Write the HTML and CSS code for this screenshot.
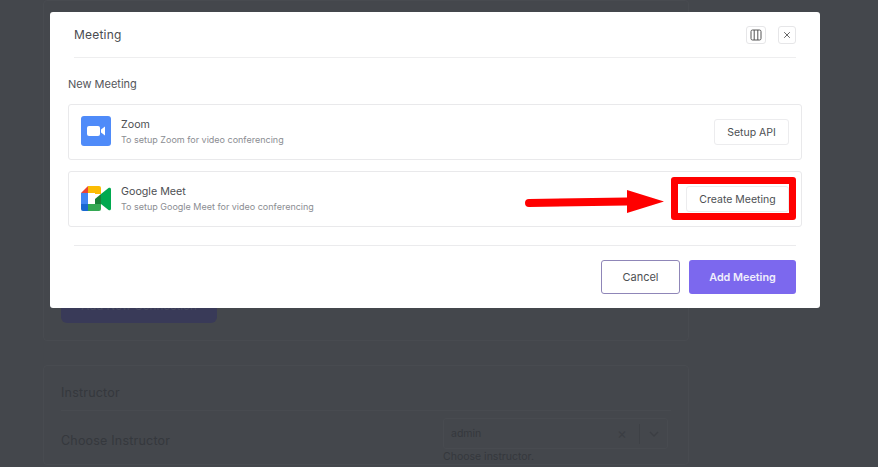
FILE: index.html
```html
<!DOCTYPE html>
<html lang="en">
<head>
    <title>Meeting</title>
    <link rel="stylesheet" href="styles.css">
</head>
<body>
    <div class="page">
        <div class="panel panel-top">
            <button class="connect-btn" type="button">Add New Connection</button>
        </div>
        <div class="panel panel-instructor">
            <h3 class="panel-title">Instructor</h3>
            <div class="field-row">
                <span class="field-label">Choose Instructor</span>
                <div class="field-side">
                    <div class="fake-select">
                        <span class="fake-value">admin</span>
                        <span class="fake-clear">&times;</span>
                        <span class="fake-sep"></span>
                        <svg class="fake-caret" width="12" height="12" viewBox="0 0 12 12"><path d="M2 4l4 4 4-4" fill="none" stroke="#3b3e43" stroke-width="1.3"/></svg>
                    </div>
                    <div class="field-help">Choose instructor.</div>
                </div>
            </div>
        </div>
    </div>

    <div class="modal">
        <div class="modal-head">
            <span class="modal-title">Meeting</span>
            <div class="head-actions">
                <button class="icon-btn icon-btn-wide" type="button" aria-label="Expand">
                    <svg width="12" height="12" viewBox="0 0 12 12"><rect x="1" y="1" width="10" height="10" rx="1.500" fill="none" stroke="#555" stroke-width="1"/><path d="M4.200 1v10M7.800 1v10" stroke="#555" stroke-width="1"/></svg>
                </button>
                <button class="icon-btn" type="button" aria-label="Close">
                    <svg width="8" height="8" viewBox="0 0 8 8"><path d="M1.200 1.200l5.600 5.600M6.800 1.200l-5.600 5.600" stroke="#666" stroke-width="1"/></svg>
                </button>
            </div>
        </div>
        <div class="modal-body">
            <div class="section-label">New Meeting</div>
            <div class="provider">
                <svg class="provider-icon provider-icon-zoom" width="30" height="30" viewBox="0 0 30 30">
                    <rect width="30" height="30" rx="3" fill="#4f8bf9"/>
                    <rect x="6" y="10" width="13" height="10" rx="2" fill="#fff"/>
                    <path d="M20 13.600l4-3.200v9.200l-4-3.200z" fill="#fff"/>
                </svg>
                <div class="provider-text">
                    <div class="provider-name">Zoom</div>
                    <div class="provider-desc">To setup Zoom for video conferencing</div>
                </div>
                <button class="outline-btn" type="button">Setup API</button>
            </div>
            <div class="provider">
                <svg class="provider-icon" width="30" height="26" viewBox="0 0 30 26">
                    <path d="M7 0h11a2 2 0 0 1 2 2v6h-6V7H7z" fill="#fbbc04"/>
                    <path d="M7 0v7H0z" fill="#ea4335"/>
                    <path d="M0 7h7v11H0z" fill="#4285f4"/>
                    <path d="M0 18h7v7H2a2 2 0 0 1-2-2z" fill="#1967d2"/>
                    <path d="M7 18h13v5a2 2 0 0 1-2 2H7z" fill="#34a853"/>
                    <path d="M14 13l6-5v10h-6z" fill="#188038"/>
                    <path d="M20 8l7.500-6c1-.7 2.500-.2 2.500 1.200v19.600c0 1.400-1.500 1.900-2.500 1.200L20 18z" fill="#00a94f"/>
                </svg>
                <div class="provider-text">
                    <div class="provider-name">Google Meet</div>
                    <div class="provider-desc">To setup Google Meet for video conferencing</div>
                </div>
                <button class="outline-btn outline-btn-wide" type="button">Create Meeting</button>
            </div>
        </div>
        <div class="modal-foot">
            <button class="cancel-btn" type="button">Cancel</button>
            <button class="add-btn" type="button">Add Meeting</button>
        </div>
    </div>

    <!-- red annotation drawn on top of the screenshot -->
    <div class="mark-box"></div>
    <svg class="mark-arrow" width="142" height="26" viewBox="0 0 142 26">
        <path d="M5 10L103 8.500V1l37 11.500L103 24v-7.500L5 18a4 4 0 0 1 0-8z" fill="#f00"/>
    </svg>
</body>
</html>
```
FILE: styles.css
```css
* {
    box-sizing: border-box;
}
body {
    margin: 0;
    height: 467px;
    overflow: hidden;
    background-color: #44474c;
    font-family: Inter, "Liberation Sans", sans-serif;
}
button {
    font-family: inherit;
    cursor: pointer;
}

/* dimmed page behind the modal */
.page {
    margin-left: 43px;
    width: 646px;
}
.panel {
    border: 1px solid #484b50;
    border-radius: 4px;
    padding: 0 17px;
}
.panel-top {
    height: 341px;
    padding-top: 288px;
}
.connect-btn {
    display: block;
    width: 156px;
    height: 34px;
    padding: 0;
    border: none;
    border-radius: 6px;
    background-color: #393a58;
    color: #46495f;
    font-size: 11.500px;
}
.panel-instructor {
    margin-top: 24px;
    padding-top: 18px;
}
.panel-title {
    margin: 0;
    padding-bottom: 8px;
    border-bottom: 1px solid #484b50;
    color: #35383d;
    font-size: 12.500px;
    font-weight: 400;
    letter-spacing: 0.2px;
    line-height: 18px;
}
.field-row {
    display: flex;
    justify-content: space-between;
    padding: 7px 3px 0 0;
}
.field-label {
    margin-top: 15px;
    color: #35383d;
    font-size: 12.500px;
    letter-spacing: 0.2px;
    line-height: 16px;
}
.field-side {
    width: 225px;
}
.fake-select {
    display: flex;
    align-items: center;
    height: 31px;
    padding: 0 7px;
    border: 1px solid #484b50;
    border-radius: 3px;
    color: #35383d;
    font-size: 10.500px;
}
.fake-value {
    flex: 1;
}
.fake-clear {
    margin-right: 12px;
    font-size: 15px;
    color: #3b3e43;
}
.fake-sep {
    width: 1px;
    height: 20px;
    margin-right: 8px;
    background-color: #3e4146;
}
.field-help {
    margin-top: 1px;
    color: #35383d;
    font-size: 10.500px;
    line-height: 14px;
}

/* modal */
.modal {
    position: fixed;
    left: 50px;
    top: 12px;
    width: 770px;
    height: 296px;
    padding: 0 24px;
    border-radius: 3px;
    background-color: #fff;
}
.modal-head {
    display: flex;
    align-items: center;
    justify-content: space-between;
    height: 46px;
    border-bottom: 1px solid #eeeeef;
}
.modal-title {
    color: #4a4c50;
    font-size: 12px;
    letter-spacing: 0.2px;
}
.head-actions {
    display: flex;
    gap: 12px;
}
.icon-btn {
    display: flex;
    align-items: center;
    justify-content: center;
    width: 18px;
    height: 18px;
    padding: 0;
    border: 1px solid #e6e6e8;
    border-radius: 3px;
    background-color: #fff;
}
.icon-btn-wide {
    width: 20px;
}
.modal-body {
    margin: 0 -6px;
    height: 187px;
}
.section-label {
    padding-top: 19px;
    padding-bottom: 13px;
    color: #54565a;
    font-size: 11px;
    line-height: 14px;
}
.provider {
    display: flex;
    align-items: center;
    height: 56px;
    margin-bottom: 11px;
    padding: 0 12px;
    border: 1px solid #e9e9eb;
    border-radius: 3px;
}
.provider-icon {
    flex: none;
}
.provider-icon-zoom {
    margin-top: -2px;
}
.provider-text {
    flex: 1;
    margin-left: 10px;
}
.provider-name {
    color: #4d4f53;
    font-size: 10.700px;
    line-height: 14px;
}
.provider-desc {
    color: #8b8d92;
    font-size: 9px;
    line-height: 15px;
}
.outline-btn {
    width: 75px;
    height: 26px;
    padding: 0;
    border: 1px solid #ececee;
    border-radius: 3px;
    background-color: #fff;
    color: #4d4f53;
    font-size: 10.500px;
}
.outline-btn-wide {
    width: 103px;
}
.modal-foot {
    display: flex;
    justify-content: flex-end;
    gap: 9px;
    padding-top: 14px;
    border-top: 1px solid #ebebed;
}
.cancel-btn {
    width: 79px;
    height: 34px;
    border: 1px solid #8f86b8;
    border-radius: 3px;
    background-color: #fff;
    color: #4d4f53;
    font-size: 11px;
}
.add-btn {
    width: 107px;
    height: 34px;
    border: none;
    border-radius: 3px;
    background-color: #7c68ee;
    color: #f0eefc;
    font-size: 10.800px;
    font-weight: 600;
}

/* annotation */
.mark-box {
    position: fixed;
    left: 671px;
    top: 177px;
    width: 125px;
    height: 43px;
    border: 7.500px solid #f00;
    border-radius: 3px;
}
.mark-arrow {
    position: fixed;
    left: 524px;
    top: 189px;
}
```
